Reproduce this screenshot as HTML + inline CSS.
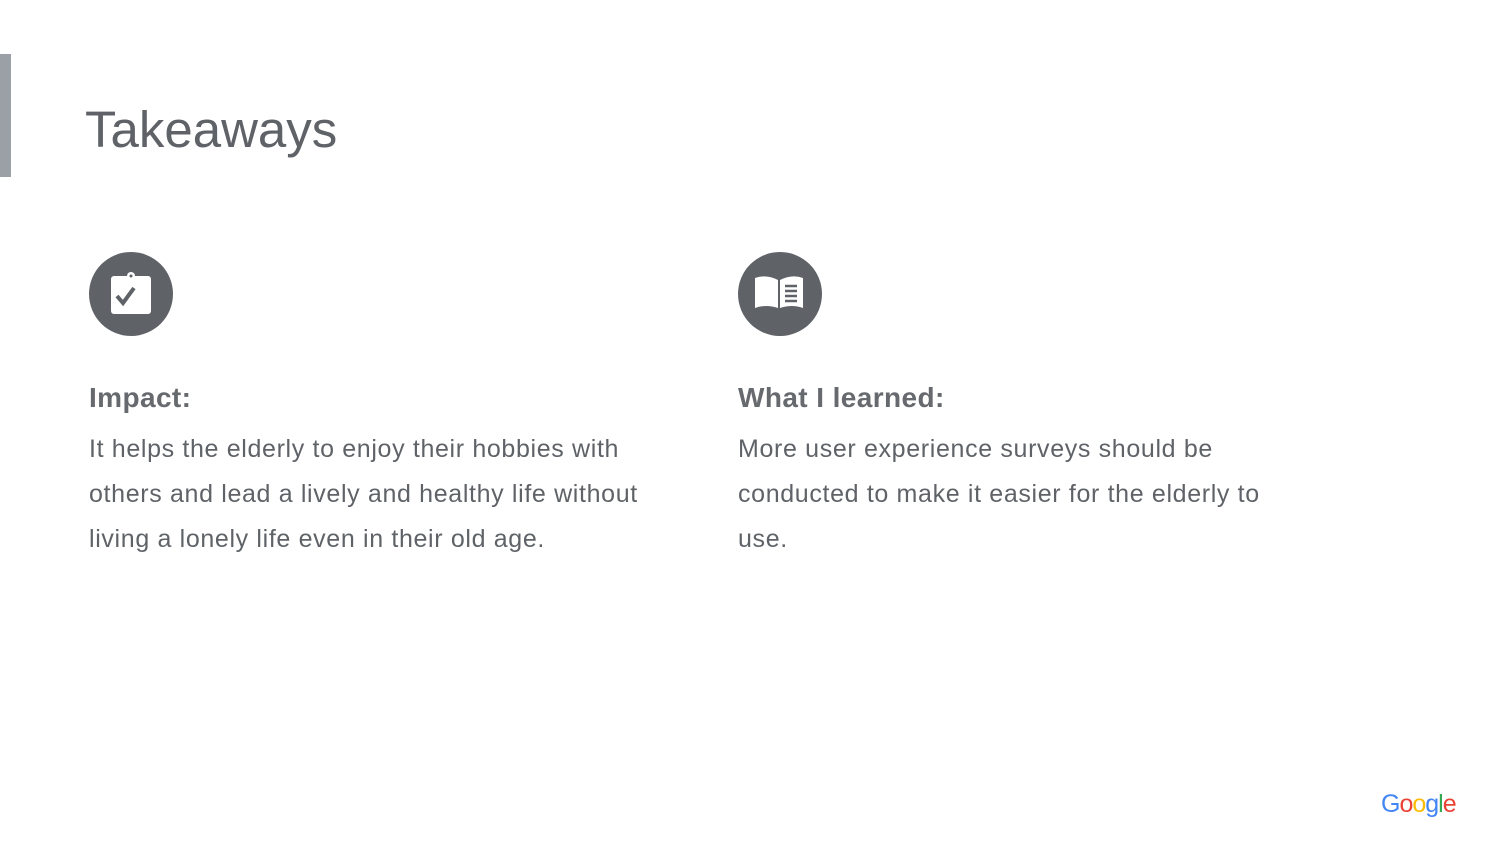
<!DOCTYPE html>
<html><head><meta charset="utf-8"><style>
body{margin:0;width:1500px;height:844px;background:#fff;position:relative;overflow:hidden;font-family:"Liberation Sans",sans-serif;color:#5f6368}
.bar{position:absolute;left:0;top:54px;width:11px;height:123px;background:#9aa0a6}
h1{position:absolute;left:85px;top:98px;margin:0;font-weight:normal;font-size:51px;line-height:64px;color:#5f6368}
.c{position:absolute;top:252px;width:84px;height:84px;border-radius:50%;background:#5f6368}
h2{position:absolute;top:378px;margin:0;font-size:28px;font-weight:bold;line-height:40px;color:#66696d;letter-spacing:0.4px}
p{position:absolute;top:427px;margin:0;font-size:25px;line-height:45px;white-space:nowrap;letter-spacing:0.65px}
.g{position:absolute;left:1381px;top:790px;font-size:25px;letter-spacing:-1px}
</style></head><body>
<div class="bar"></div>
<h1>Takeaways</h1>
<div class="c" style="left:89px"><svg width="84" height="84" viewBox="0 0 84 84">
<rect x="22" y="24" width="40" height="38" rx="3" fill="#fff"/>
<circle cx="42" cy="24" r="4" fill="#fff"/><circle cx="42" cy="24" r="1.5" fill="#5f6368"/>
<path d="M28 44 L34 51 L45 36" stroke="#5f6368" stroke-width="4" fill="none"/></svg></div>
<div class="c" style="left:738px"><svg width="84" height="84" viewBox="0 0 84 84">
<path d="M17 26 Q28 22 40 28 L40 56 Q28 52 17 56 Z" fill="#fff"/>
<path d="M42 28 Q54 22 65 26 L65 56 Q54 52 42 56 Z" fill="#fff"/>
<path d="M47 34h12M47 39h12M47 44h12M47 49h12" stroke="#5f6368" stroke-width="2.5"/></svg></div>
<h2 style="left:89px">Impact:</h2>
<p style="left:89px">It helps the elderly to enjoy their hobbies with<br>others and lead a lively and healthy life without<br>living a lonely life even in their old age.</p>
<h2 style="left:738px">What I learned:</h2>
<p style="left:738px">More user experience surveys should be<br>conducted to make it easier for the elderly to<br>use.</p>
<div class="g"><span style="color:#4285f4">G</span><span style="color:#ea4335">o</span><span style="color:#fbbc05">o</span><span style="color:#4285f4">g</span><span style="color:#34a853">l</span><span style="color:#ea4335">e</span></div>
</body></html>
